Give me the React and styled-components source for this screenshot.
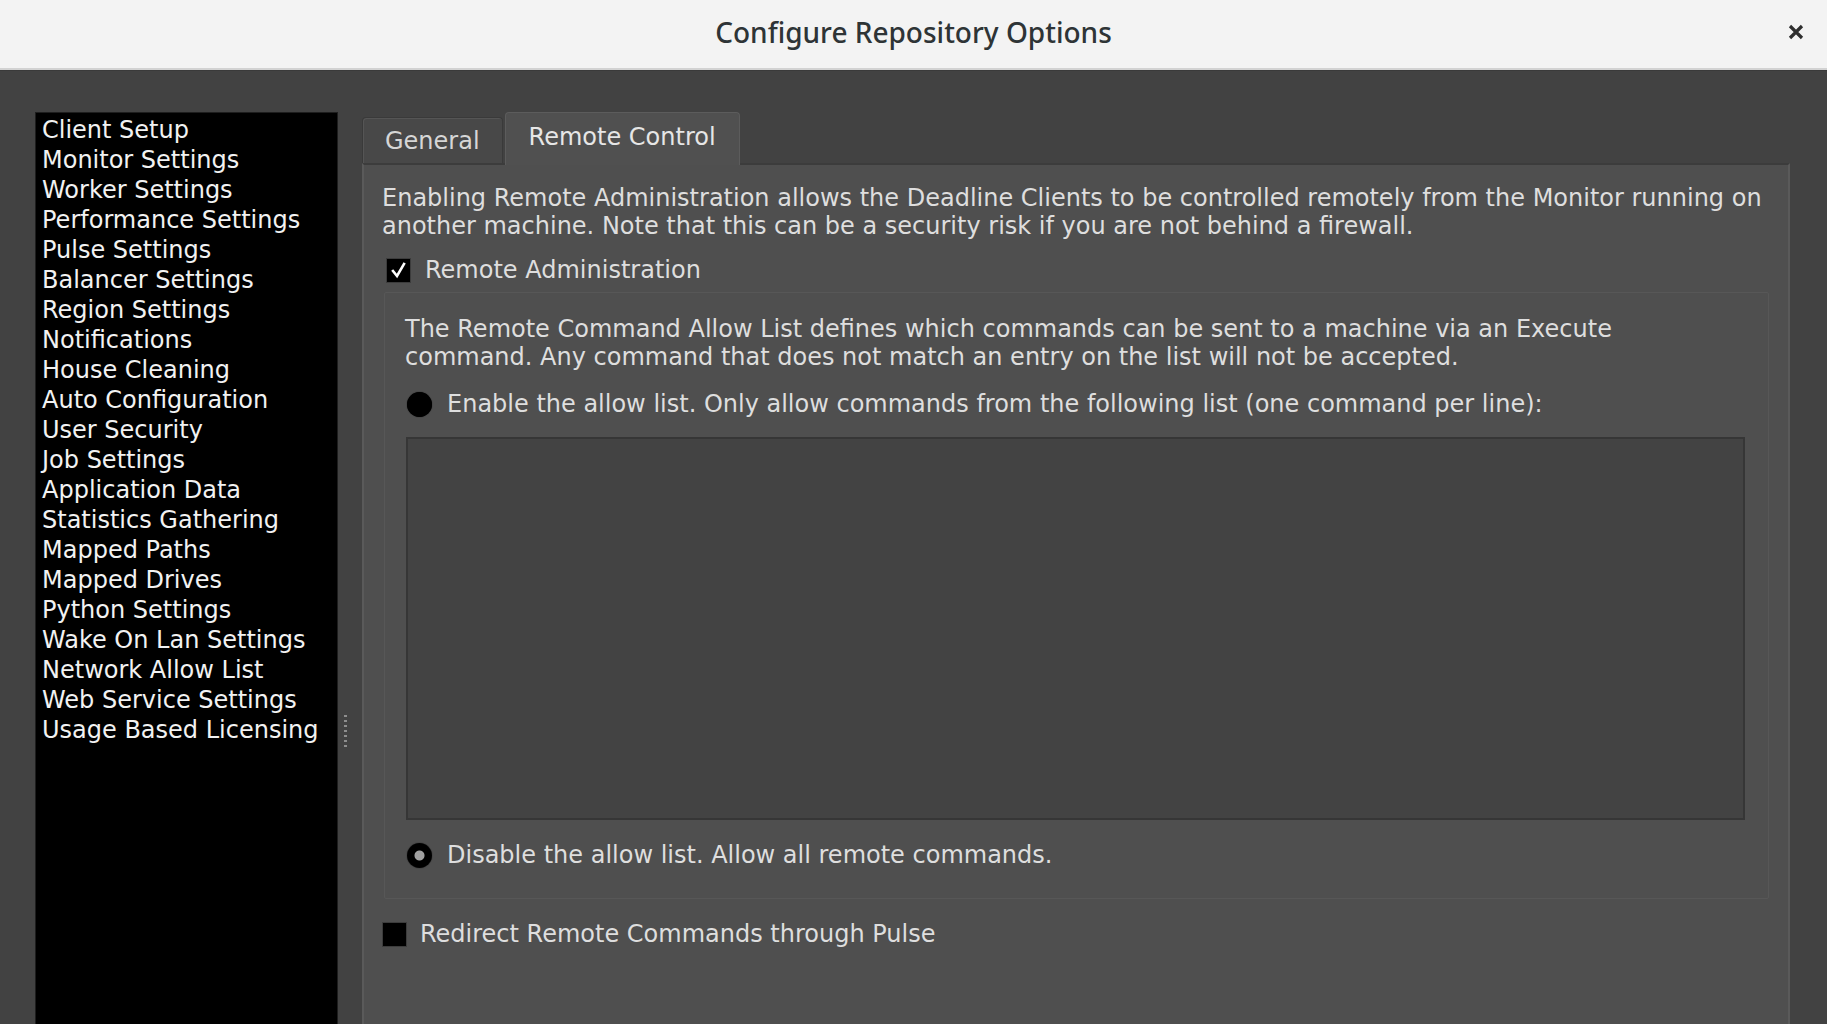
import React from 'react';
import styled, { createGlobalStyle } from 'styled-components';

const GlobalStyle = createGlobalStyle`
    html, body {
        margin: 0;
        padding: 0;
        background: #424242;
        overflow: hidden;
    }
    * {
        box-sizing: border-box;
    }
`

const Window = styled.div`
    width: 1827px;
    height: 1024px;
    display: flex;
    flex-direction: column;
    overflow: hidden;
    background: #424242;
    font-family: "DejaVu Sans", "Noto Sans", sans-serif;
`

const TitleBar = styled.header`
    height: 70px;
    flex: none;
    display: grid;
    grid-template-columns: 1fr auto 1fr;
    align-items: center;
    background: #f3f3f3;
    border-bottom: 2px solid #d2d2d2;
    box-shadow: 0 1px 0 #3a3a3a;
`

const Title = styled.h1`
    grid-column: 2;
    margin: 0;
    padding-bottom: 4px;
    font-family: "Noto Sans", "DejaVu Sans", sans-serif;
    font-size: 28px;
    font-weight: 500;
    color: #2e3436;
`

const CloseButton = styled.button`
    grid-column: 3;
    justify-self: end;
    margin-right: 21px;
    margin-bottom: 4px;
    width: 20px;
    height: 20px;
    padding: 0;
    border: none;
    background: transparent;
    display: flex;
    align-items: center;
    justify-content: center;
`

const Body = styled.div`
    flex: none;
    height: 1282px;
    display: flex;
    padding: 42px 37px 0 35px;
`

const Sidebar = styled.ul`
    width: 303px;
    flex: none;
    margin: 0;
    padding: 2px 6px;
    list-style: none;
    background: #000;
    border: 1px solid #1e1e1e;
`

const SidebarItem = styled.li`
    height: 30px;
    line-height: 30px;
    font-size: 24px;
    color: #f2f2f2;
    white-space: nowrap;
`

const Splitter = styled.div`
    width: 24px;
    flex: none;
    display: flex;
    align-items: center;
    padding-left: 6px;
`

const Grip = styled.span`
    width: 3px;
    height: 34px;
    background-image: linear-gradient(#8e8e8e 0 2px, transparent 2px);
    background-size: 3px 5px;
`

const TabWidget = styled.section`
    flex: 1;
    display: flex;
    flex-direction: column;
    min-width: 0;
`

const TabBar = styled.div`
    height: 51px;
    flex: none;
    display: flex;
    align-items: flex-end;
    gap: 2px;
    position: relative;
    z-index: 1;
`

const Tab = styled.div`
    height: ${p => (p.$active ? '53px' : '46px')};
    margin-bottom: ${p => (p.$active ? '-2px' : '0')};
    padding: 0 ${p => (p.$active ? '23px' : '22px')};
    display: flex;
    align-items: center;
    font-size: 24px;
    color: ${p => (p.$active ? '#e6e6e6' : '#d6d6d6')};
    background: ${p => (p.$active ? '#505050' : '#484848')};
    border: 1px solid ${p => (p.$active ? '#5c5c5c' : '#3a3a3a')};
    border-bottom: none;
    border-radius: 4px 4px 0 0;
    box-shadow: ${p => (p.$active ? 'none' : 'inset 1px 1px 0 #555')};
    padding-bottom: ${p => (p.$active ? '4px' : '0')};
`

const Pane = styled.div`
    flex: 1;
    background: #4f4f4f;
    border: 2px solid #5a5a5a;
    border-top-color: #3c3c3c;
    padding: 19px 19px 0 18px;
    display: flex;
    flex-direction: column;
    color: #dedede;
    font-size: 24px;
`

const Paragraph = styled.p`
    margin: 0;
    line-height: 28px;
    white-space: nowrap;
`

const OptionRow = styled.label`
    display: flex;
    align-items: center;
    height: 30px;
    gap: ${p => p.$gap || 14}px;
    margin-left: ${p => p.$indent || 0}px;
    white-space: nowrap;
`

const CheckBox = styled.span`
    width: 25px;
    height: 25px;
    flex: none;
    background: #000;
    border: 1px solid #3c3c3c;
    display: flex;
    align-items: center;
    justify-content: center;
`

const Radio = styled.span`
    width: 25px;
    height: 25px;
    flex: none;
    border-radius: 50%;
    background: ${p => (p.$checked ? 'radial-gradient(circle, #a0a0a0 0 4.5px, #000 5.5px)' : '#000')};
    box-shadow: 0 0 1px #000;
`

const GroupBox = styled.fieldset`
    margin: 7px 0 0 2px;
    padding: 22px 23px 28px 20px;
    border: 1px solid #575757;
    border-radius: 2px;
    display: flex;
    flex-direction: column;
    min-width: 0;
`

const CommandList = styled.div`
    height: 383px;
    margin: 18px 0 20px 1px;
    background: #434343;
    border: 2px solid #363636;
`

const Check = () => (
    <svg width='17' height='17' viewBox='0 0 17 17'>
        <path d='M3 9 L7 14 L14 2' fill='none' stroke='#fff' strokeWidth='2.6' strokeLinecap='square' />
    </svg>
)

const navItems = [
    'Client Setup', 'Monitor Settings', 'Worker Settings', 'Performance Settings',
    'Pulse Settings', 'Balancer Settings', 'Region Settings', 'Notifications',
    'House Cleaning', 'Auto Configuration', 'User Security', 'Job Settings',
    'Application Data', 'Statistics Gathering', 'Mapped Paths', 'Mapped Drives',
    'Python Settings', 'Wake On Lan Settings', 'Network Allow List',
    'Web Service Settings', 'Usage Based Licensing',
]

const App = () => {
    return (
        <Window>
            <GlobalStyle />
            <TitleBar>
                <Title>Configure Repository Options</Title>
                <CloseButton aria-label='Close'>
                    <svg width='16' height='16' viewBox='0 0 16 16'>
                        <path d='M2 2 L14 14 M14 2 L2 14' stroke='#2e2e2e' strokeWidth='3.2' />
                    </svg>
                </CloseButton>
            </TitleBar>
            <Body>
                <Sidebar>
                    {navItems.map(item => <SidebarItem key={item}>{item}</SidebarItem>)}
                </Sidebar>
                <Splitter><Grip /></Splitter>
                <TabWidget>
                    <TabBar>
                        <Tab>General</Tab>
                        <Tab $active>Remote Control</Tab>
                    </TabBar>
                    <Pane>
                        <Paragraph>
                            Enabling Remote Administration allows the Deadline Clients to be controlled remotely from the Monitor running on<br />
                            another machine. Note that this can be a security risk if you are not behind a firewall.
                        </Paragraph>
                        <OptionRow $indent={4} style={{ marginTop: 15 }}>
                            <CheckBox><Check /></CheckBox>
                            Remote Administration
                        </OptionRow>
                        <GroupBox>
                            <Paragraph>
                                The Remote Command Allow List defines which commands can be sent to a machine via an Execute<br />
                                command. Any command that does not match an entry on the list will not be accepted.
                            </Paragraph>
                            <OptionRow $indent={2} $gap={15} style={{ marginTop: 18 }}>
                                <Radio />
                                Enable the allow list. Only allow commands from the following list (one command per line):
                            </OptionRow>
                            <CommandList />
                            <OptionRow $indent={2} $gap={15}>
                                <Radio $checked />
                                Disable the allow list. Allow all remote commands.
                            </OptionRow>
                        </GroupBox>
                        <OptionRow $gap={13} style={{ marginTop: 20 }}>
                            <CheckBox />
                            Redirect Remote Commands through Pulse
                        </OptionRow>
                    </Pane>
                </TabWidget>
            </Body>
        </Window>
    )
}

export default App
